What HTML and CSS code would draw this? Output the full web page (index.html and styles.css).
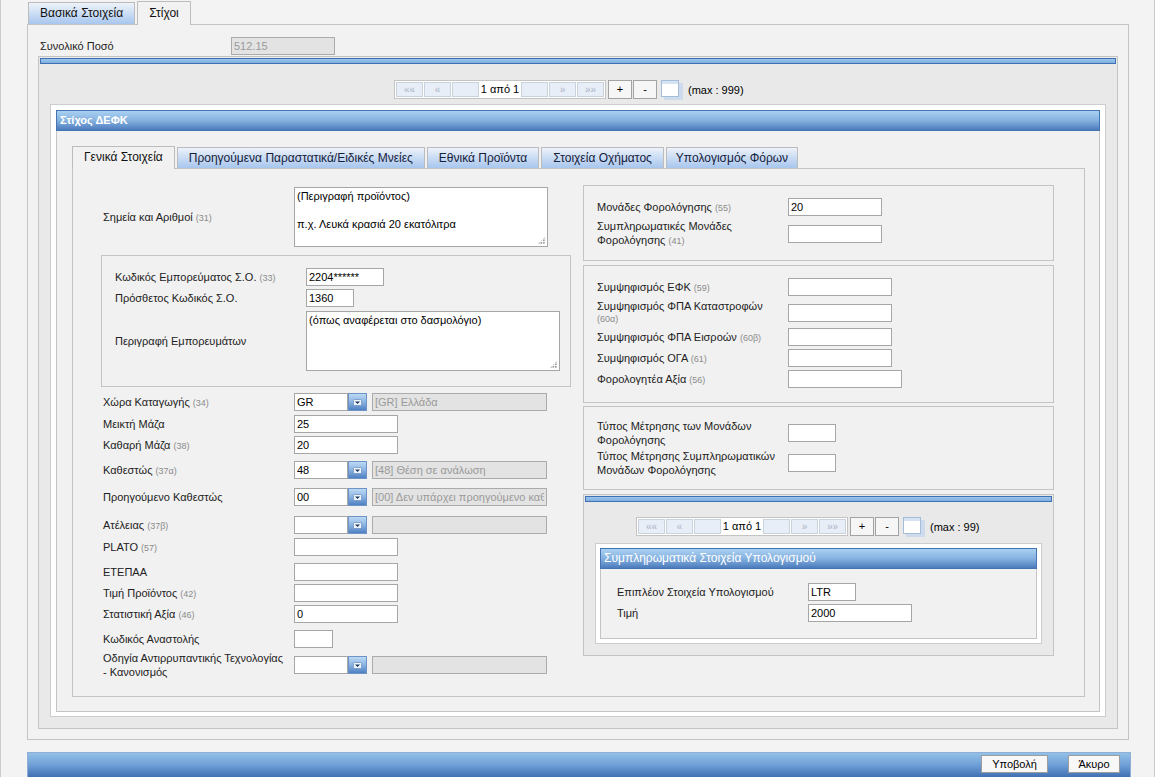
FILE: index.html
```html
<!DOCTYPE html>
<html lang="el">
<head>
<meta charset="utf-8">
<title>Στίχοι</title>
<link rel="stylesheet" href="styles.css">
</head>
<body>
<div class="page">
  <div class="top-tabs">
    <div class="tab">Βασικά Στοιχεία</div>
    <div class="tab active">Στίχοι</div>
  </div>
  <div class="main-panel">
    <div class="total-row">
      <div class="lbl">Συνολικό Ποσό</div>
      <input class="in dis w104" value="512.15" disabled>
    </div>
    <div class="grid-panel">
      <div class="bar"></div>
      <div class="pager main-pager">
        <div class="pg-group">
          <span class="pc">««</span><span class="pc">«</span><span class="pc"></span><span class="pt">1 από 1</span><span class="pc"></span><span class="pc">»</span><span class="pc">»»</span>
        </div>
        <span class="pb">+</span><span class="pb pb2">-</span>
        <svg class="pi" width="24" height="22" viewBox="0 0 24 22"><rect x="4" y="4" width="19" height="17" fill="#cddbec"/><rect x="1.5" y="1.5" width="17" height="16" fill="#fff" stroke="#a6bdd9"/><rect x="2" y="2" width="16" height="3" fill="#d6e3f2"/></svg>
        <span class="pmax">(max : 999)</span>
      </div>
      <div class="win">
        <div class="win-inner">
          <div class="win-head">Στίχος ΔΕΦΚ</div>
          <div class="inner-tabs">
            <div class="itab active">Γενικά Στοιχεία</div>
            <div class="itab">Προηγούμενα Παραστατικά/Ειδικές Μνείες</div>
            <div class="itab">Εθνικά Προϊόντα</div>
            <div class="itab">Στοιχεία Οχήματος</div>
            <div class="itab t-last">Υπολογισμός Φόρων</div>
          </div>
          <div class="tab-body">
            <div class="col-l">
              <div class="row mt2">
                <div class="lbl">Σημεία και Αριθμοί <span class="h">(31)</span></div>
                <div class="ta-wrap"><textarea class="ta w254">(Περιγραφή προϊόντος)

π.χ. Λευκά κρασιά 20 εκατόλιτρα</textarea></div>
              </div>
              <div class="fs">
                <div class="row">
                  <div class="lbl">Κωδικός Εμπορεύματος Σ.Ο. <span class="h">(33)</span></div>
                  <input class="in w78" value="2204******">
                </div>
                <div class="row mt3">
                  <div class="lbl">Πρόσθετος Κωδικός Σ.Ο.</div>
                  <input class="in w48" value="1360">
                </div>
                <div class="row mt4">
                  <div class="lbl">Περιγραφή Εμπορευμάτων</div>
                  <div class="ta-wrap"><textarea class="ta w254">(όπως αναφέρεται στο δασμολόγιο)</textarea></div>
                </div>
              </div>
              <div class="row mt6">
                <div class="lbl">Χώρα Καταγωγής <span class="h">(34)</span></div>
                <div class="sel"><input class="in sel-in" value="GR"><span class="sel-btn"><svg width="9" height="7" viewBox="0 0 9 7"><rect x="0.5" y="0.5" width="8" height="6" rx="1" fill="#eef4fb" stroke="#5d80b0" stroke-width="0.6"/><path d="M2 2.4h5L4.5 5z" fill="#1c3560"/></svg></span></div>
                <input class="in dis w175" value="[GR] Ελλάδα" disabled>
              </div>
              <div class="row mt4">
                <div class="lbl">Μεικτή Μάζα</div>
                <input class="in w104" value="25">
              </div>
              <div class="row mt3">
                <div class="lbl">Καθαρή Μάζα <span class="h">(38)</span></div>
                <input class="in w104" value="20">
              </div>
              <div class="row mt7">
                <div class="lbl">Καθεστώς <span class="h">(37α)</span></div>
                <div class="sel"><input class="in sel-in" value="48"><span class="sel-btn"><svg width="9" height="7" viewBox="0 0 9 7"><rect x="0.5" y="0.5" width="8" height="6" rx="1" fill="#eef4fb" stroke="#5d80b0" stroke-width="0.6"/><path d="M2 2.4h5L4.5 5z" fill="#1c3560"/></svg></span></div>
                <input class="in dis w175" value="[48] Θέση σε ανάλωση" disabled>
              </div>
              <div class="row mt9">
                <div class="lbl">Προηγούμενο Καθεστώς</div>
                <div class="sel"><input class="in sel-in" value="00"><span class="sel-btn"><svg width="9" height="7" viewBox="0 0 9 7"><rect x="0.5" y="0.5" width="8" height="6" rx="1" fill="#eef4fb" stroke="#5d80b0" stroke-width="0.6"/><path d="M2 2.4h5L4.5 5z" fill="#1c3560"/></svg></span></div>
                <input class="in dis w175" value="[00] Δεν υπάρχει προηγούμενο καθεστώς" disabled>
              </div>
              <div class="row mt10">
                <div class="lbl">Ατέλειας <span class="h">(37β)</span></div>
                <div class="sel"><input class="in sel-in" value=""><span class="sel-btn"><svg width="9" height="7" viewBox="0 0 9 7"><rect x="0.5" y="0.5" width="8" height="6" rx="1" fill="#eef4fb" stroke="#5d80b0" stroke-width="0.6"/><path d="M2 2.4h5L4.5 5z" fill="#1c3560"/></svg></span></div>
                <input class="in dis w175" value="" disabled>
              </div>
              <div class="row mt4">
                <div class="lbl">PLATO <span class="h">(57)</span></div>
                <input class="in w104" value="">
              </div>
              <div class="row mt7">
                <div class="lbl">ΕΤΕΠΑΑ</div>
                <input class="in w104" value="">
              </div>
              <div class="row mt3">
                <div class="lbl">Τιμή Προϊόντος <span class="h">(42)</span></div>
                <input class="in w104" value="">
              </div>
              <div class="row mt3">
                <div class="lbl">Στατιστική Αξία <span class="h">(46)</span></div>
                <input class="in w104" value="0">
              </div>
              <div class="row mt7">
                <div class="lbl">Κωδικός Αναστολής</div>
                <input class="in w39" value="">
              </div>
              <div class="row mt3">
                <div class="lbl l2">Οδηγία Αντιρρυπαντικής Τεχνολογίας<br>- Κανονισμός</div>
                <div class="sel"><input class="in sel-in" value=""><span class="sel-btn"><svg width="9" height="7" viewBox="0 0 9 7"><rect x="0.5" y="0.5" width="8" height="6" rx="1" fill="#eef4fb" stroke="#5d80b0" stroke-width="0.6"/><path d="M2 2.4h5L4.5 5z" fill="#1c3560"/></svg></span></div>
                <input class="in dis w175" value="" disabled>
              </div>
            </div>
            <div class="col-r">
              <div class="box b1">
                <div class="row">
                  <div class="lbl">Μονάδες Φορολόγησης <span class="h">(55)</span></div>
                  <input class="in w94" value="20">
                </div>
                <div class="row mt3">
                  <div class="lbl l2">Συμπληρωματικές Μονάδες<br>Φορολόγησης <span class="h">(41)</span></div>
                  <input class="in w94" value="">
                </div>
              </div>
              <div class="box b2">
                <div class="row">
                  <div class="lbl">Συμψηφισμός ΕΦΚ <span class="h">(59)</span></div>
                  <input class="in w104" value="">
                </div>
                <div class="row mt4">
                  <div class="lbl l2s">Συμψηφισμός ΦΠΑ Καταστροφών<br><span class="h">(60α)</span></div>
                  <input class="in w104" value="">
                </div>
                <div class="row mt3">
                  <div class="lbl">Συμψηφισμός ΦΠΑ Εισροών <span class="h">(60β)</span></div>
                  <input class="in w104" value="">
                </div>
                <div class="row mt3">
                  <div class="lbl">Συμψηφισμός ΟΓΑ <span class="h">(61)</span></div>
                  <input class="in w104" value="">
                </div>
                <div class="row mt3">
                  <div class="lbl">Φορολογητέα Αξία <span class="h">(56)</span></div>
                  <input class="in w114" value="">
                </div>
              </div>
              <div class="box b3">
                <div class="row">
                  <div class="lbl l2">Τύπος Μέτρησης των Μονάδων<br>Φορολόγησης</div>
                  <input class="in w48" value="">
                </div>
                <div class="row mt2">
                  <div class="lbl l2">Τύπος Μέτρησης Συμπληρωματικών<br>Μονάδων Φορολόγησης</div>
                  <input class="in w48" value="">
                </div>
              </div>
              <div class="box4">
                <div class="bar"></div>
                <div class="pager sub-pager">
                  <div class="pg-group">
                    <span class="pc">««</span><span class="pc">«</span><span class="pc"></span><span class="pt">1 από 1</span><span class="pc"></span><span class="pc">»</span><span class="pc">»»</span>
                  </div>
                  <span class="pb">+</span><span class="pb pb2">-</span>
                  <svg class="pi" width="24" height="22" viewBox="0 0 24 22"><rect x="4" y="4" width="19" height="17" fill="#cddbec"/><rect x="1.5" y="1.5" width="17" height="16" fill="#fff" stroke="#a6bdd9"/><rect x="2" y="2" width="16" height="3" fill="#d6e3f2"/></svg>
                  <span class="pmax">(max : 99)</span>
                </div>
                <div class="win sub-win">
                  <div class="win-inner">
                    <div class="win-head sub-head">Συμπληρωματικά Στοιχεία Υπολογισμού</div>
                    <div class="sub-body">
                      <div class="row">
                        <div class="lbl">Επιπλέον Στοιχεία Υπολογισμού</div>
                        <input class="in w48" value="LTR">
                      </div>
                      <div class="row mt3">
                        <div class="lbl">Τιμή</div>
                        <input class="in w104" value="2000">
                      </div>
                    </div>
                  </div>
                </div>
              </div>
            </div>
          </div>
        </div>
      </div>
    </div>
  </div>
  <div class="footer">
    <button class="btn b-submit">Υποβολή</button>
    <button class="btn b-cancel">Άκυρο</button>
  </div>
</div>
</body>
</html>
```
FILE: styles.css
```css
* { box-sizing: border-box; }
html, body { margin: 0; padding: 0; }
body {
  background: #f3f3f3;
  font-family: "Liberation Sans", Arial, sans-serif;
  font-size: 11px;
  color: #222;
}
.page {
  width: 1155px;
  height: 777px;
  border-left: 1px solid #cbcbcb;
  border-right: 1px solid #cbcbcb;
  padding: 1px 25px 0 26px;
  overflow: hidden;
}

/* top tabs */
.top-tabs {
  display: flex;
  align-items: flex-end;
  height: 23px;
  padding-left: 1px;
  position: relative;
  z-index: 1;
}
.tab {
  height: 22px;
  margin-right: 2px;
  padding: 0 11px;
  border: 1px solid #bcbcbc;
  border-bottom: none;
  background: linear-gradient(#eef3fa, #d6e4f6 35%, #a8c6ee);
  font-size: 12px;
  line-height: 21px;
  color: #111;
  white-space: nowrap;
}
.tab.active {
  height: 24px;
  margin-bottom: -1px;
  background: #f2f2f2;
  line-height: 23px;
}

/* main panel */
.main-panel {
  height: 716px;
  border: 1px solid #c4c4c4;
  background: #f2f2f2;
  padding: 0 10px;
}
.total-row {
  display: flex;
  align-items: center;
  height: 18px;
  margin-top: 12px;
  padding-left: 2px;
}
.grid-panel {
  height: 673px;
  margin-top: 1px;
  border: 1px solid #c4c4c4;
  background: #e9e9e9;
  padding: 1px 1px 0;
}
.bar {
  height: 6px;
  border: 1px solid #3f70b4;
  background: linear-gradient(#9cc6ec, #7eaee0);
}

/* pager */
.pager {
  display: flex;
  align-items: center;
  height: 19px;
}
.main-pager { margin-top: 16px; padding-left: 354px; }
.sub-pager { margin-top: 15px; padding-left: 51px; }
.pg-group {
  display: flex;
  gap: 1px;
  height: 19px;
  padding: 1px;
  border: 1px solid #c4c4c4;
  background: #fff;
}
.pc {
  width: 27px;
  height: 15px;
  border: 1px solid #cad2dc;
  background: #e8eef7;
  color: #aab4c6;
  font-size: 10px;
  line-height: 13px;
  text-align: center;
}
.pt {
  width: 40px;
  height: 15px;
  line-height: 15px;
  text-align: center;
  font-size: 11px;
  color: #000;
}
.pb {
  width: 24px;
  height: 19px;
  margin-left: 2px;
  border: 1px solid #a3a3a3;
  background: #f6f6f6;
  text-align: center;
  font-size: 11px;
  line-height: 17px;
  color: #000;
}
.pb2 { margin-left: 1px; }
.pi { display: block; margin-left: 3px; flex: none; }
.pmax { margin-left: 4px; color: #000; font-size: 11px; }

/* windows */
.win {
  margin: 5px 10px 0;
  border: 1px solid #cdcdcd;
  background: #fff;
  padding: 5px 5px 4px;
}
.win-inner {
  border: 1px solid #c4c4c4;
  border-top: none;
  background: #f1f1f1;
}
.win-head {
  height: 21px;
  margin: 0 -1px;
  border: 1px solid #4574b3;
  background: linear-gradient(#a9d0f1, #86b2e0 50%, #4c7bbd);
  color: #fff;
  font-weight: bold;
  font-size: 11px;
  line-height: 19px;
  padding-left: 3px;
  white-space: nowrap;
}

/* inner tabs */
.inner-tabs {
  display: flex;
  align-items: flex-end;
  height: 22px;
  margin: 15px 0 0 15px;
  position: relative;
  z-index: 1;
}
.itab {
  height: 21px;
  margin-right: 2px;
  padding: 0 11px;
  border: 1px solid #bcbcbc;
  border-bottom: none;
  background: linear-gradient(#edf2fa, #d3e2f5 35%, #a8c6ee);
  font-size: 12px;
  line-height: 20px;
  color: #16203a;
  white-space: nowrap;
}
.itab.t-last { padding: 0 9px; }
.itab.active {
  height: 23px;
  margin-bottom: -1px;
  background: #f1f1f1;
  line-height: 21px;
  color: #111;
}
.tab-body {
  display: flex;
  gap: 12px;
  height: 529px;
  margin: 0 14px 14px 15px;
  border: 1px solid #c4c4c4;
  background: #f1f1f1;
  padding: 16px 0 0 28px;
}
.col-l { width: 470px; flex: none; }
.col-r { width: 471px; flex: none; }
.col-l > .row { padding-left: 2px; }

/* rows and fields */
.row { display: flex; align-items: center; }
.mt2 { margin-top: 2px; }
.mt3 { margin-top: 3px; }
.mt4 { margin-top: 4px; }
.mt6 { margin-top: 6px; }
.mt7 { margin-top: 7px; }
.mt9 { margin-top: 9px; }
.mt10 { margin-top: 10px; }
.lbl {
  width: 191px;
  flex: none;
  font-size: 11px;
  line-height: 14px;
  color: #222;
  white-space: nowrap;
}
.lbl.l2 { line-height: 14px; }
.lbl.l2s { line-height: 12px; }
.h { font-size: 9px; color: #8b8b8b; }

.in {
  display: block;
  height: 18px;
  margin: 0;
  padding: 0 2px;
  border: 1px solid #a6a6a6;
  background: #fff;
  font-family: "Liberation Sans", Arial, sans-serif;
  font-size: 11px;
  color: #000;
  outline: none;
  flex: none;
}
.in.dis { background: #e3e3e3; color: #9a9a9a; border-color: #ababab; }
.w39 { width: 39px; }
.w48 { width: 48px; }
.w78 { width: 78px; }
.w94 { width: 94px; }
.w104 { width: 104px; }
.w114 { width: 114px; }
.w175 { width: 175px; margin-left: 5px; }

.ta-wrap { position: relative; flex: none; }
.ta-wrap::after {
  content: "";
  position: absolute;
  right: 3px;
  bottom: 3px;
  width: 7px;
  height: 7px;
  background: radial-gradient(circle at 1px 1px, #9a9a9a 0.8px, transparent 1.1px) 0 0 / 2.5px 2.5px;
  clip-path: polygon(100% 0, 100% 100%, 0 100%);
  pointer-events: none;
}
.ta {
  display: block;
  height: 60px;
  margin: 0;
  padding: 1px 2px;
  border: 1px solid #a6a6a6;
  background: #fff;
  font-family: "Liberation Sans", Arial, sans-serif;
  font-size: 11px;
  line-height: 14px;
  color: #000;
  resize: none;
  overflow: hidden;
  outline: none;
}
.w254 { width: 254px; }

.sel { display: flex; width: 73px; flex: none; }
.sel-in { width: 54px; }
.sel-btn {
  display: flex;
  align-items: center;
  justify-content: center;
  width: 19px;
  height: 18px;
  border: 1px solid #6e93c6;
  background: linear-gradient(#bcd9f4, #8ab3e2 50%, #4f80c2);
}
.sel-btn svg { display: block; }

.fs {
  margin-top: 8px;
  border: 1px solid #c4c4c4;
  padding: 12px 0 15px 13px;
}

/* right column boxes */
.box {
  border: 1px solid #c4c4c4;
  padding: 12px 0 12px 13px;
}
.b2 { margin-top: 4px; padding-bottom: 14px; }
.b3 { margin-top: 3px; }
.box4 {
  margin-top: 4px;
  border: 1px solid #c4c4c4;
  background: #e9e9e9;
  padding: 1px 1px 0;
}
.sub-win {
  margin: 7px 10px 11px;
  padding: 4px;
}
.sub-head {
  font-weight: normal;
  font-size: 12px;
}
.sub-body { padding: 14px 0 16px 16px; }

/* footer */
.footer {
  display: flex;
  justify-content: flex-end;
  align-items: flex-start;
  gap: 20px;
  height: 26px;
  margin: 12px -2px 0 0;
  border: 1px solid #8fb0d4;
  background: linear-gradient(#93c0e8, #6f9fd6 50%, #4070b3);
  padding: 2px 10px 0 0;
}
.btn {
  height: 18px;
  margin: 0;
  padding: 0;
  border: 1px solid #9d9d9d;
  background: #f8f8f8;
  font-family: "Liberation Sans", Arial, sans-serif;
  font-size: 11px;
  color: #000;
}
.b-submit { width: 67px; }
.b-cancel { width: 52px; }
```
